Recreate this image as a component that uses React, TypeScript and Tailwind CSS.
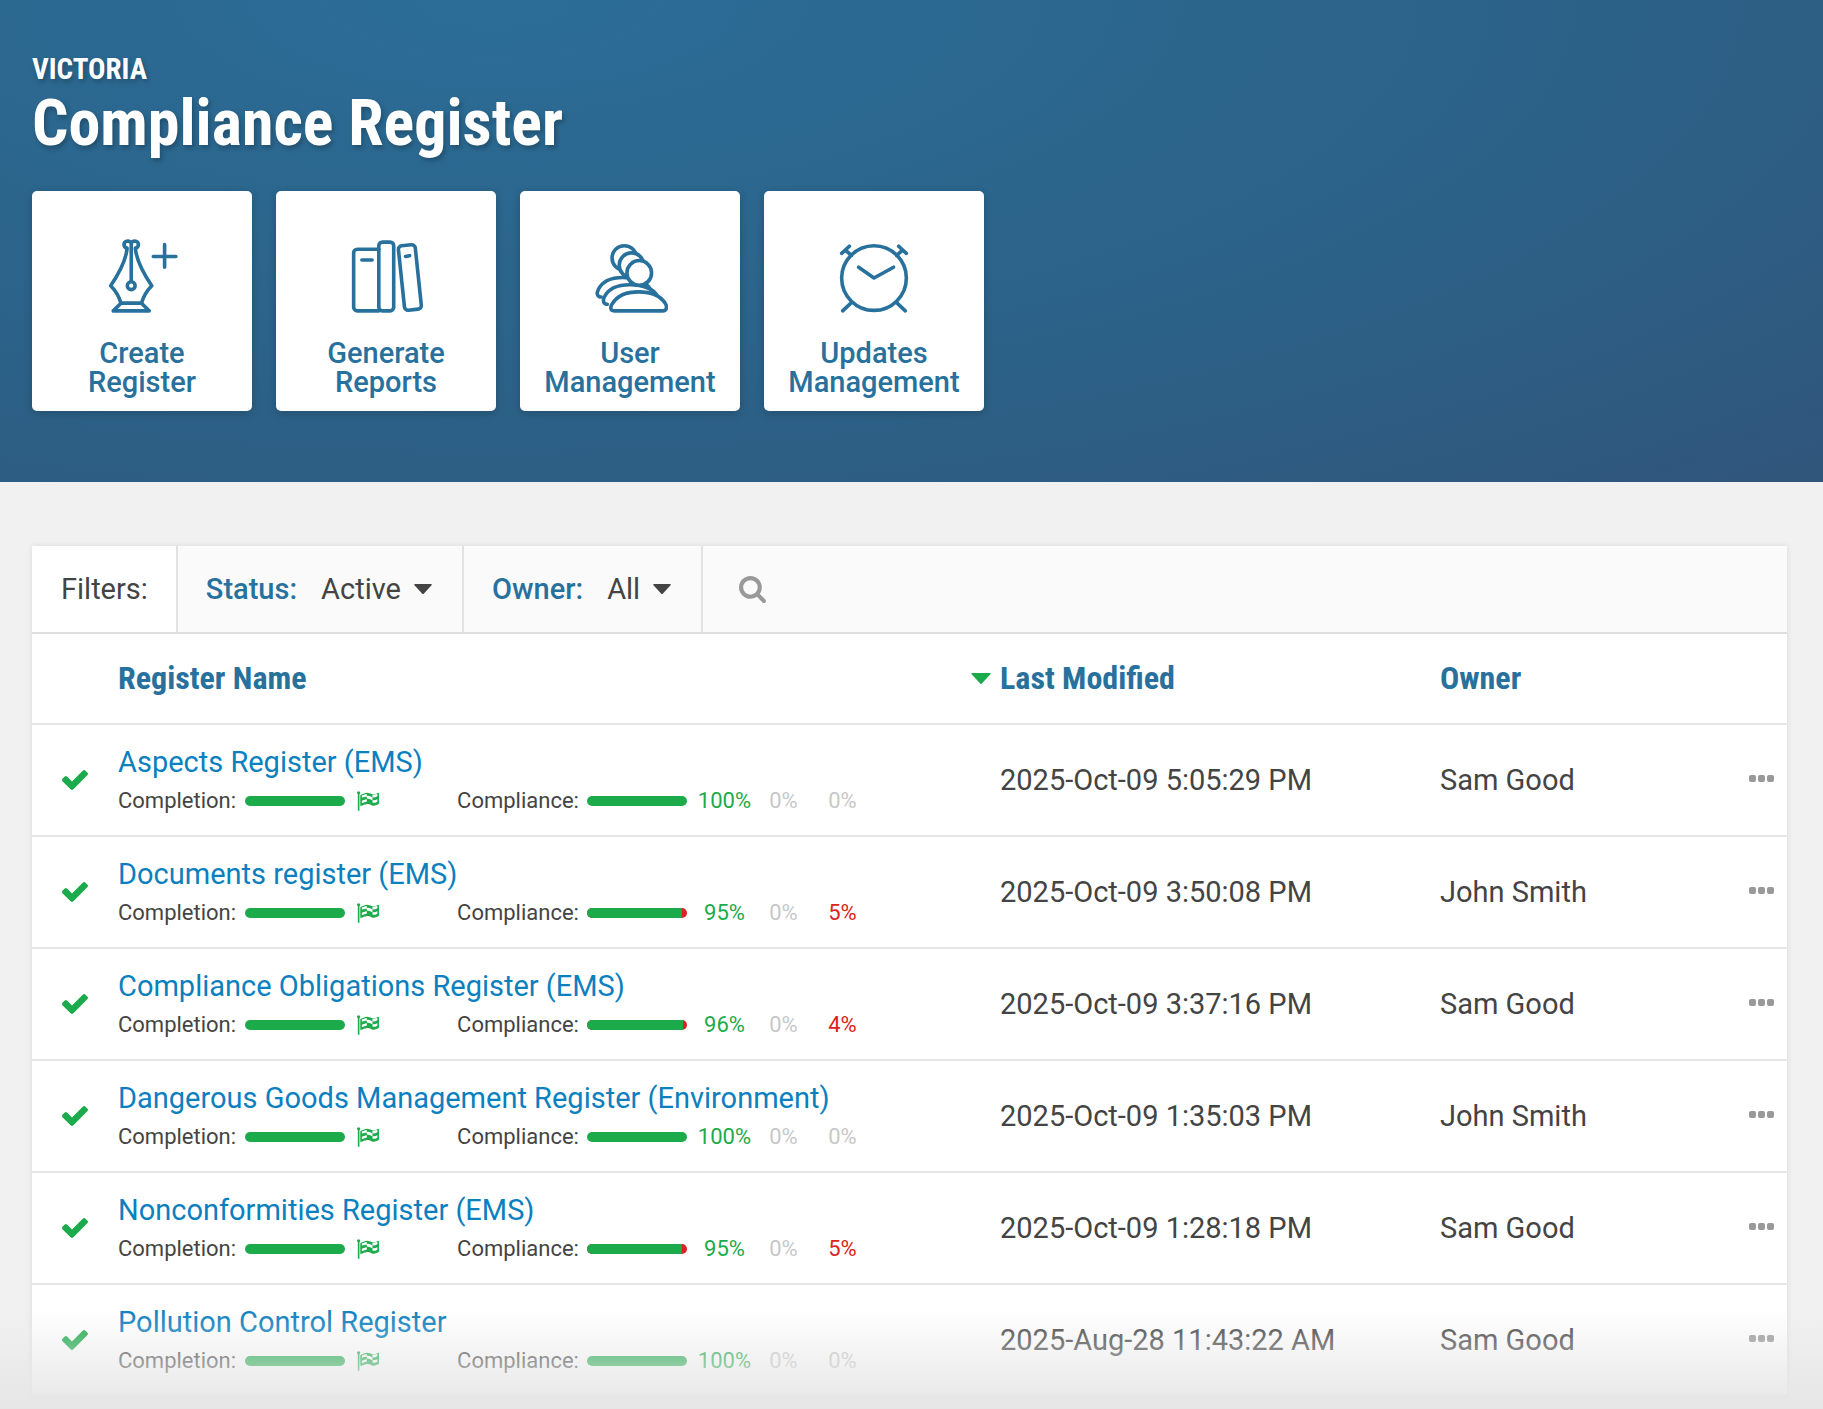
import React from 'react';

const registers = [
  { id: 1, name: 'Aspects Register (EMS)', compliant: 100, partial: 0, failed: 0, modified: '2025-Oct-09 5:05:29 PM', owner: 'Sam Good' },
  { id: 2, name: 'Documents register (EMS)', compliant: 95, partial: 0, failed: 5, modified: '2025-Oct-09 3:50:08 PM', owner: 'John Smith' },
  { id: 3, name: 'Compliance Obligations Register (EMS)', compliant: 96, partial: 0, failed: 4, modified: '2025-Oct-09 3:37:16 PM', owner: 'Sam Good' },
  { id: 4, name: 'Dangerous Goods Management Register (Environment)', compliant: 100, partial: 0, failed: 0, modified: '2025-Oct-09 1:35:03 PM', owner: 'John Smith' },
  { id: 5, name: 'Nonconformities Register (EMS)', compliant: 95, partial: 0, failed: 5, modified: '2025-Oct-09 1:28:18 PM', owner: 'Sam Good' },
  { id: 6, name: 'Pollution Control Register', compliant: 100, partial: 0, failed: 0, modified: '2025-Aug-28 11:43:22 AM', owner: 'Sam Good' },
];

const PenIcon = () => (
  <g transform="translate(1 0)">
    <path d="M24.5 3.500c-2.500-2.500-7-1.500-7 2 0 2 1.500 3 3 3.500-1 11-7.500 24-16 36.500 4 4 8 10 10 17h20c2-7 6-13 10-17-8.500-12.500-15-25.500-16-36.500 1.500-.5 3-1.500 3-3.500 0-3.500-4.500-4.500-7-2z" />
    <path d="M24.500 4v37" />
    <circle cx="24.500" cy="45.500" r="3.800" />
    <path d="M14.500 62.500L7 70h35l-7.500-7.500z" />
    <path d="M46 17h22M57 5.500v22" />
  </g>
);

const BooksIcon = () => (
  <g transform="translate(2 0)">
    <path d="M27 10H6a3.500 3.500 0 0 0-3.500 3.500v53A3.500 3.500 0 0 0 6 70h21" />
    <rect x="27" y="3" width="14.500" height="67" rx="3.500" />
    <rect x="49" y="6" width="16.500" height="63" rx="3.500" transform="rotate(-6 57 37.500)" />
    <path d="M10.500 20.500h10M53 17l4-.8" />
  </g>
);

const UsersIcon = () => (
  <g fill="#fff">
    <path d="M8 56.500c-3.500 0-5-3-3-7C9 41 18 37.500 29 37.500s24 4 27 12" />
    <path d="M14 63.500c-3.500 0-5-3-3-7C15 48 24 44.500 36 44.500s24 4 27 12" />
    <path d="M20.500 70h47.500c3.500 0 4.500-3.500 2.500-7C66 55.500 57 51.500 44.500 51.500S23 55.500 18.500 63.500c-2 3.500-1.500 6.500 2 6.500z" />
    <circle cx="30.500" cy="18.500" r="12" />
    <circle cx="37.500" cy="25.500" r="12" />
    <circle cx="45" cy="33" r="12" />
  </g>
);

const ClockIcon = () => (
  <>
    <circle cx="36" cy="38" r="31.500" />
    <path d="M21 27.500l15 10.500L55 27.500" />
    <path d="M14 62L5.500 70M58 62l8.500 8" />
    <path d="M4.500 14l7.500-7M8.500 11l5.500 5M60 7l7.500 7M63.500 11l-5.500 5" />
  </>
);

const actions = [
  { id: 'create', lines: ['Create', 'Register'], icon: PenIcon },
  { id: 'reports', lines: ['Generate', 'Reports'], icon: BooksIcon },
  { id: 'users', lines: ['User', 'Management'], icon: UsersIcon },
  { id: 'updates', lines: ['Updates', 'Management'], icon: ClockIcon },
];

const Caret = ({ className }: { className: string }) => (
  <svg viewBox="0 0 18 10" className={className} fill="currentColor" aria-hidden="true">
    <path d="M1 0h16q1.500 0 .5 1.200L10 9.400q-1 1-2 0L.5 1.200Q-.5 0 1 0z" />
  </svg>
);

const CheckIcon = () => (
  <svg viewBox="121 334 1550 1188" className="h-5 w-[26px] text-[#1cab4a]" fill="currentColor" role="img" aria-label="Active">
    <path d="M1671 566q0 40-28 68l-724 724-136 136q-28 28-68 28t-68-28l-136-136-362-362q-28-28-28-68t28-68l136-136q28-28 68-28t68 28l294 295 656-657q28-28 68-28t68 28l136 136q28 28 28 68z" />
  </svg>
);

const FlagIcon = () => (
  <svg viewBox="64 128 1728 1536" className="h-5 w-[22px] text-[#1cab4a]" fill="currentColor" fillRule="evenodd" aria-hidden="true">
    <path d="M320 256q0 72-64 110v1266q0 13-9.500 22.500t-22.500 9.500h-64q-13 0-22.500-9.500t-9.500-22.500v-1266q-64-38-64-110 0-53 37.500-90.500t90.500-37.500 90.500 37.500 37.500 90.500zM1792 320v763q0 25-12.500 38.500t-39.500 27.500q-215 116-369 116-61 0-123.500-22t-108.500-48-115.500-48-142.500-22q-192 0-464 146-17 9-33 9-26 0-45-19t-19-45v-742q0-32 31-55 21-14 79-43 236-120 421-120 107 0 200 29t219 88q38 19 88 19 54 0 117.500-21t110-47 88-47 54.500-21q26 0 45 19t19 45zM832 536v-192q-181 16-384 117v185q205-96 384-110zM832 954v-197q-172 8-384 126v189q215-111 384-118zM1664 947v-184q-235 116-384 71v-224q-20-6-39-15-5-3-33-17t-34.500-17-31.500-15-34.500-15.500-32.500-13-36-12.500-35-8.500-39.500-7.500-39.500-4-44-2q-23 0-49 3v222h19q102 0 192.500 29t197.500 82q19 9 39 15v188q42 17 91 17 120 0 293-92zM1664 518v-189q-169 91-306 91-45 0-78-8v196q148 42 384-90z" />
  </svg>
);

interface FilterProps {
  id: string;
  label: string;
  options: string[];
  width: string;
}

const Filter: React.FC<FilterProps> = ({ id, label, options, width }) => (
  <div className="flex items-center border-r-2 border-[#e2e2e2] pr-[30px] pl-7">
    <label htmlFor={id} className="font-medium text-[#28719d]">{label}</label>
    <div className="ml-6 flex items-center">
      <select id={id} className={`appearance-none bg-transparent outline-none ${width}`}>
        {options.map((option) => (
          <option key={option}>{option}</option>
        ))}
      </select>
      <Caret className="pointer-events-none h-[10px] w-[18px]" />
    </div>
  </div>
);

interface PercentProps {
  value: number;
  color: string;
}

const Percent: React.FC<PercentProps> = ({ value, color }) => (
  <span className={`w-[59px] text-center ${value > 0 ? color : 'text-[#c8c8c8]'}`}>{value}%</span>
);

export default function App() {
  return (
    <div className="relative min-h-screen overflow-hidden bg-[#f1f1f1] font-[Roboto,'Liberation_Sans',sans-serif] text-[29px] leading-8 text-[#444]">
      <header className="bg-[radial-gradient(ellipse_at_27%_0%,#2b6d97_0%,#2c6187_60%,#31547a_105%)] px-8 pt-[52px] pb-[71px]">
        <div className="font-['Roboto_Condensed',Roboto,sans-serif] font-bold text-white [text-shadow:2px_3px_5px_rgba(0,0,0,0.25)]">
          <p className="text-[29px] leading-[34px]">VICTORIA</p>
          <h1 className="text-[64px] leading-[75px]">Compliance Register</h1>
        </div>
        <nav className="mt-[30px] flex gap-6">
          {actions.map((action) => (
            <button
              key={action.id}
              className="flex h-[220px] w-[220px] flex-col items-center rounded-[5px] bg-white pt-12 leading-[29px] font-medium text-[#28719d] shadow-[0_2px_8px_rgba(0,0,0,0.2)]"
            >
              <svg viewBox="-1 0 74 74" className="mb-6 h-[76px] w-[76px]" fill="none" stroke="currentColor" strokeWidth="3.500" strokeLinecap="round" strokeLinejoin="round" aria-hidden="true">
                <action.icon />
              </svg>
              {action.lines.map((line) => (
                <span key={line}>{line}</span>
              ))}
            </button>
          ))}
        </nav>
      </header>

      <main className="mt-16 mr-9 ml-8 bg-white shadow-[0_0_6px_rgba(0,0,0,0.1)]">
        <div className="flex h-[88px] border-b-2 border-[#dedede] bg-[#fafafa]">
          <div className="flex items-center border-r-2 border-[#e2e2e2] bg-white pr-7 pl-[29px]">Filters:</div>
          <Filter id="status" label="Status:" options={['Active']} width="w-[93px]" />
          <Filter id="owner" label="Owner:" options={['All']} width="w-[46px]" />
          <button aria-label="Search" className="px-9 text-[#999]">
            <svg viewBox="64 128 1664 1664" className="h-[27px] w-[27px]" fill="currentColor">
              <path d="M1216 832q0-185-131.500-316.500t-316.500-131.500-316.500 131.500-131.500 316.500 131.500 316.500 316.500 131.500 316.500-131.500 131.500-316.500zm512 832q0 52-38 90t-90 38q-54 0-90-38l-343-342q-179 124-399 124-143 0-273.500-55.500t-225-150-150-225-55.500-273.500 55.500-273.500 150-225 225-150 273.500-55.500 273.500 55.500 225 150 150 225 55.500 273.500q0 220-124 399l343 343q37 37 37 90z" />
            </svg>
          </button>
        </div>

        <table className="w-full table-fixed border-collapse text-left">
          <colgroup>
            <col className="w-[86px]" />
            <col />
            <col className="w-[440px]" />
            <col className="w-[301px]" />
            <col className="w-[46px]" />
          </colgroup>
          <thead>
            <tr className="h-[90px] border-b-2 border-[#e6e6e6] font-['Roboto_Condensed',Roboto,sans-serif] text-[32px] text-[#28719d]">
              <th aria-label="Status" />
              <th className="pb-[2px] font-bold">Register Name</th>
              <th className="pb-[2px] font-bold">
                <div className="-ml-[29px] flex items-center gap-[9px]">
                  <Caret className="mt-[2px] h-[11px] w-5 text-[#1cab4a]" />
                  Last Modified
                </div>
              </th>
              <th className="pb-[2px] font-bold">Owner</th>
              <th aria-label="Actions" />
            </tr>
          </thead>
          <tbody>
            {registers.map((register) => (
              <tr key={register.id} className="h-28 border-b-2 border-[#e6e6e6]">
                <td className="pl-[30px]"><CheckIcon /></td>
                <td className="pb-[1px]">
                  <a href="#" className="block text-[#0b80bf]">{register.name}</a>
                  <div className="mt-[11px] flex items-center text-[22px] leading-6">
                    <span>Completion:</span>
                    <span className="ml-[9px] h-[10px] w-[100px] rounded-full bg-[#1cab4a]" />
                    <span className="ml-3"><FlagIcon /></span>
                    <span className="ml-[78px]">Compliance:</span>
                    <span className="mr-2 ml-2 flex h-[10px] w-[100px] overflow-hidden rounded-full bg-[#dc2222]">
                      <span className="bg-[#1cab4a]" style={{ width: `${register.compliant}%` }} />
                    </span>
                    <Percent value={register.compliant} color="text-[#1cab4a]" />
                    <Percent value={register.partial} color="text-[#e8a020]" />
                    <Percent value={register.failed} color="text-[#dc2222]" />
                  </div>
                </td>
                <td>{register.modified}</td>
                <td>{register.owner}</td>
                <td className="pb-1">
                  <button aria-label="More actions" className="ml-2 flex gap-[2px]">
                    <span className="h-[7px] w-[7px] rounded-[2px] bg-[#999]" />
                    <span className="h-[7px] w-[7px] rounded-[2px] bg-[#999]" />
                    <span className="h-[7px] w-[7px] rounded-[2px] bg-[#999]" />
                  </button>
                </td>
              </tr>
            ))}
          </tbody>
        </table>
      </main>

      {/* fade out at the bottom of the page */}
      <div className="pointer-events-none absolute inset-x-0 bottom-0 h-[100px] bg-linear-to-b from-[#e6e6e6]/0 to-[#e6e6e6]" />
    </div>
  );
}
